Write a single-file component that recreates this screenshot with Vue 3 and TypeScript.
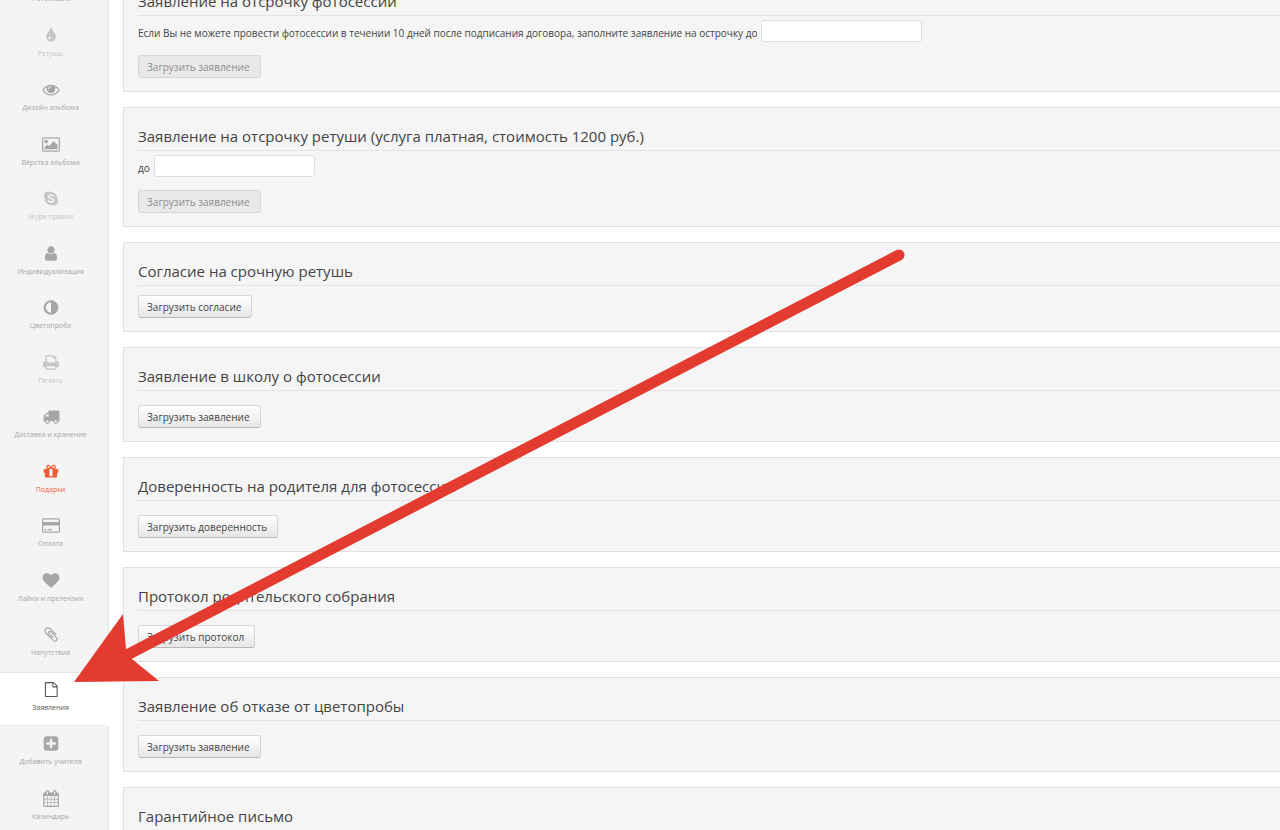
<script setup lang="ts">
type Tone = 'normal' | 'faded' | 'hot' | 'active'

interface NavItem {
  label: string
  tone: Tone
  path: string
  viewBox?: string
}

interface Panel {
  id: string
  title: string
  action: string
  disabled?: boolean
  field?: string
  tight?: boolean
}

const nav: NavItem[] = [
  {
    label: 'Фотосессия',
    tone: 'normal',
    path: 'M192 448h1408v1024h-1408z',
  },
  {
    label: 'Ретушь',
    tone: 'faded',
    path: 'M896 1152q0-36-20-69-1-1-15.5-22.5t-25.5-38-25-44-21-50.5q-4-16-21-16t-21 16q-7 23-21 50.5t-25 44-25.5 38-15.5 22.5q-20 33-20 69 0 53 37.5 90.5t90.5 37.5 90.5-37.5 37.5-90.5zm512-128q0 212-150 362t-362 150-362-150-150-362q0-145 81-275 6-9 62.5-90.5t101-151 99.5-178 83-201.5q9-30 34-47t51-17 51.5 17 33.5 47q28 93 83 201.5t99.5 178 101 151 62.5 90.5q81 127 81 275z',
  },
  {
    label: 'Дизайн альбома',
    tone: 'normal',
    path: 'M1664 960q-152-236-381-353 61 104 61 225 0 185-131.5 316.5t-316.5 131.5-316.5-131.5-131.5-316.5q0-121 61-225-229 117-381 353 133 205 333.5 326.5t434.5 121.5 434.5-121.5 333.5-326.5zm-720-384q0-20-14-34t-34-14q-125 0-214.5 89.5t-89.5 214.5q0 20 14 34t34 14 34-14 14-34q0-86 61-147t147-61q20 0 34-14t14-34zm848 384q0 34-20 69-140 230-376.5 368.5t-499.5 138.5-499.5-139-376.5-368q-20-35-20-69t20-69q140-229 376.5-368t499.5-139 499.5 139 376.5 368q20 35 20 69z',
  },
  {
    label: 'Вёрстка альбома',
    tone: 'normal',
    viewBox: '-64 0 1920 1792',
    path: 'M576 576q0 80-56 136t-136 56-136-56-56-136 56-136 136-56 136 56 56 136zm1024 384v448h-1408v-192l320-320 160 160 512-512zm96-704h-1600q-13 0-22.5 9.5t-9.5 22.5v1216q0 13 9.5 22.5t22.5 9.5h1600q13 0 22.5-9.5t9.5-22.5v-1216q0-13-9.5-22.5t-22.5-9.5zm160 32v1216q0 66-47 113t-113 47h-1600q-66 0-113-47t-47-113v-1216q0-66 47-113t113-47h1600q66 0 113 47t47 113z',
  },
  { label: 'Skype правки', tone: 'faded', path: '' },
  {
    label: 'Индивидуализация',
    tone: 'normal',
    path: 'M1536 1399q0 109-62.5 187t-150.5 78h-854q-88 0-150.5-78t-62.5-187q0-85 8.5-160.5t31.5-152 58.5-131 94-89 134.5-34.5q131 128 313 128t313-128q76 0 134.5 34.5t94 89 58.5 131 31.5 152 8.5 160.5zm-256-887q0 159-112.5 271.5t-271.5 112.5-271.5-112.5-112.5-271.5 112.5-271.5 271.5-112.5 271.5 112.5 112.5 271.5z',
  },
  {
    label: 'Цветопроба',
    tone: 'normal',
    path: 'M896 1440v-1088q-148 0-273 73t-198 198-73 273 73 273 198 198 273 73zm768-544q0 209-103 385.5t-279.5 279.5-385.5 103-385.5-103-279.5-279.5-103-385.5 103-385.5 279.5-279.5 385.5-103 385.5 103 279.5 279.5 103 385.5z',
  },
  {
    label: 'Печать',
    tone: 'faded',
    path: 'M448 1536h896v-256h-896v256zm0-640h896v-384h-160q-40 0-68-28t-28-68v-160h-640v640zm1152 64q0-26-19-45t-45-19-45 19-19 45 19 45 45 19 45-19 19-45zm128 0v416q0 13-9.5 22.5t-22.5 9.5h-224v160q0 40-28 68t-68 28h-960q-40 0-68-28t-28-68v-160h-224q-13 0-22.5-9.5t-9.5-22.5v-416q0-79 56.5-135.5t135.5-56.5h64v-544q0-40 28-68t68-28h672q40 0 88 20t76 48l152 152q28 28 48 76t20 88v256h64q79 0 135.5 56.5t56.5 135.5z',
  },
  {
    label: 'Доставка и хранение',
    tone: 'normal',
    path: 'M640 1408q0-52-38-90t-90-38-90 38-38 90 38 90 90 38 90-38 38-90zm-384-512h384v-256h-158q-13 0-22 9l-195 195q-9 9-9 22v30zm1280 512q0-52-38-90t-90-38-90 38-38 90 38 90 90 38 90-38 38-90zm256-1088v1024q0 15-4 26.5t-13.5 18.5-16.5 11.5-23.5 6-22.5 2-25.5 0-22.5-.5q0 106-75 181t-181 75-181-75-75-181h-384q0 106-75 181t-181 75-181-75-75-181h-64q-3 0-22.5.5t-25.5 0-22.5-2-23.5-6-16.5-11.5-13.5-18.5-4-26.5q0-26 19-45t45-19v-320q0-8-.5-35t0-38 2.5-34.5 6.5-37 14-30.5 22.5-30l198-198q19-19 50.5-32t58.5-13h160v-192q0-26 19-45t45-19h1024q26 0 45 19t19 45z',
  },
  {
    label: 'Подарки',
    tone: 'hot',
    path: 'M1056 1356v-716h-320v716q0 25 18 38.5t46 13.5h192q28 0 46-13.5t18-38.5zm-456-844h195l-126-161q-26-31-69-31-40 0-68 28t-28 68 28 68 68 28zm688-96q0-40-28-68t-68-28q-43 0-69 31l-125 161h194q40 0 68-28t28-68zm376 256v320q0 14-9 23t-23 9h-96v416q0 40-28 68t-68 28h-1088q-40 0-68-28t-28-68v-416h-96q-14 0-23-9t-9-23v-320q0-14 9-23t23-9h440q-93 0-158.5-65.5t-65.5-158.5 65.5-158.5 158.5-65.5q107 0 168 77l128 165 128-165q61-77 168-77 93 0 158.5 65.5t65.5 158.5-65.5 158.5-158.5 65.5h440q14 0 23 9t9 23z',
  },
  {
    label: 'Оплата',
    tone: 'normal',
    viewBox: '0 0 1920 1792',
    path: 'M1760 128q66 0 113 47t47 113v1216q0 66-47 113t-113 47h-1600q-66 0-113-47t-47-113v-1216q0-66 47-113t113-47h1600zm-1600 128q-13 0-22.5 9.5t-9.5 22.5v224h1664v-224q0-13-9.5-22.5t-22.5-9.5h-1600zm1600 1280q13 0 22.5-9.5t9.5-22.5v-608h-1664v608q0 13 9.5 22.5t22.5 9.5h1600zm-1504-128v-128h256v128h-256zm384 0v-128h384v128h-384z',
  },
  {
    label: 'Лайки и претензии',
    tone: 'normal',
    path: 'M896 1664q-26 0-44-18l-624-602q-10-8-27.5-26t-55.5-65.5-68-97.5-53.5-121-23.5-138q0-220 127-344t351-124q62 0 126.5 21.5t120 58 95.5 68.5 76 68q36-36 76-68t95.5-68.5 120-58 126.5-21.5q224 0 351 124t127 344q0 221-229 450l-623 600q-18 18-44 18z',
  },
  {
    label: 'Напутствия',
    tone: 'normal',
    path: 'M1596 1385q0 117-79 196t-196 79q-135 0-235-100l-777-776q-113-115-113-271 0-159 110-270t269-111q158 0 273 113l605 606q10 10 10 22 0 16-30.5 46.5t-46.5 30.5q-13 0-23-10l-606-607q-79-77-181-77-106 0-179 75t-73 181q0 105 76 181l776 777q63 63 145 63 64 0 106-42t42-106q0-82-63-145l-581-581q-26-24-60-24-29 0-48 19t-19 48q0 32 25 59l410 410q10 10 10 22 0 16-31 47t-47 31q-12 0-22-10l-410-410q-63-61-63-149 0-82 57-139t139-57q88 0 149 63l581 581q100 98 100 235z',
  },
  {
    label: 'Заявления',
    tone: 'active',
    viewBox: '-224 -128 1920 2048',
    path: 'M1468 380q28 28 48 76t20 88v1152q0 40-28 68t-68 28h-1344q-40 0-68-28t-28-68v-1600q0-40 28-68t68-28h896q40 0 88 20t76 48zm-444-244v376h376q-10-29-22-41l-313-313q-12-12-41-22zm384 1528v-1024h-416q-40 0-68-28t-28-68v-416h-768v1536h1280z',
  },
  {
    label: 'Добавить учителя',
    tone: 'normal',
    path: 'M1408 960v-128q0-26-19-45t-45-19h-320v-320q0-26-19-45t-45-19h-128q-26 0-45 19t-19 45v320h-320q-26 0-45 19t-19 45v128q0 26 19 45t45 19h320v320q0 26 19 45t45 19h128q26 0 45-19t19-45v-320h320q26 0 45-19t19-45zm256-544v960q0 119-84.5 203.5t-203.5 84.5h-960q-119 0-203.5-84.5t-84.5-203.5v-960q0-119 84.5-203.5t203.5-84.5h960q119 0 203.5 84.5t84.5 203.5z',
  },
  {
    label: 'Календарь',
    tone: 'normal',
    path: 'M192 1664h288v-288h-288v288zm352 0h320v-288h-320v288zm-352-352h288v-320h-288v320zm352 0h320v-320h-320v320zm-352-384h288v-288h-288v288zm736 736h320v-288h-320v288zm-384-736h320v-288h-320v288zm768 736h288v-288h-288v288zm-384-352h320v-320h-320v320zm-352-864v-288q0-13-9.5-22.5t-22.5-9.5h-64q-13 0-22.5 9.5t-9.5 22.5v288q0 13 9.5 22.5t22.5 9.5h64q13 0 22.5-9.5t9.5-22.5zm736 864h288v-320h-288v320zm-384-384h320v-288h-320v288zm384 0h288v-288h-288v288zm32-480v-288q0-13-9.5-22.5t-22.5-9.5h-64q-13 0-22.5 9.5t-9.5 22.5v288q0 13 9.5 22.5t22.5 9.5h64q13 0 22.5-9.5t9.5-22.5zm384-64v1280q0 52-38 90t-90 38h-1408q-52 0-90-38t-38-90v-1280q0-52 38-90t90-38h128v-96q0-66 47-113t113-47h64q66 0 113 47t47 113v96h384v-96q0-66 47-113t113-47h64q66 0 113 47t47 113v96h128q52 0 90 38t38 90z',
  },
]

const panels: Panel[] = [
  {
    id: 'delay-shoot',
    title: 'Заявление на отсрочку фотосессии',
    field: 'Если Вы не можете провести фотосессии в течении 10 дней после подписания договора, заполните заявление на острочку до',
    action: 'Загрузить заявление',
    disabled: true,
  },
  {
    id: 'delay-retouch',
    title: 'Заявление на отсрочку ретуши (услуга платная, стоимость 1200 руб.)',
    field: 'до',
    action: 'Загрузить заявление',
    disabled: true,
  },
  { id: 'urgent', title: 'Согласие на срочную ретушь', action: 'Загрузить согласие', tight: true },
  { id: 'school', title: 'Заявление в школу о фотосессии', action: 'Загрузить заявление' },
  { id: 'proxy', title: 'Доверенность на родителя для фотосессии', action: 'Загрузить доверенность' },
  { id: 'protocol', title: 'Протокол родительского собрания', action: 'Загрузить протокол' },
  { id: 'refusal', title: 'Заявление об отказе от цветопробы', action: 'Загрузить заявление' },
  { id: 'guarantee', title: 'Гарантийное письмо', action: 'Загрузить письмо' },
]
</script>

<template>
  <div class="page">
    <nav class="sidebar">
      <ul class="nav-list">
        <li v-for="item in nav" :key="item.label" class="nav-item" :class="item.tone">
          <a href="#" class="nav-link">
            <svg v-if="item.path" class="nav-icon" :viewBox="item.viewBox ?? '0 0 1792 1792'" aria-hidden="true">
              <path :d="item.path" fill="currentColor" />
            </svg>
            <svg v-else class="nav-icon" viewBox="0 0 18 18" aria-hidden="true">
              <circle cx="6" cy="6" r="4.5" fill="currentColor" />
              <circle cx="12" cy="12" r="4.5" fill="currentColor" />
              <circle cx="9" cy="9" r="6.8" fill="currentColor" />
              <path
                class="skype-mark"
                d="M11.8 6.8C11.3 5.7 10.3 5.4 9 5.4C7.4 5.4 6.4 6.1 6.4 7.2C6.4 9.6 11.8 8.3 11.8 10.8C11.8 12 10.6 12.6 9 12.6C7.5 12.6 6.5 12.1 6.1 11"
              />
            </svg>
            <span class="nav-label">{{ item.label }}</span>
          </a>
        </li>
      </ul>
    </nav>

    <main class="content">
      <section v-for="panel in panels" :key="panel.id" class="panel">
        <h2 class="panel-title">{{ panel.title }}</h2>
        <div v-if="panel.field" class="field">
          <label :for="panel.id">{{ panel.field }}</label>
          <input :id="panel.id" class="field-input" type="text" />
        </div>
        <button
          type="button"
          class="button"
          :class="{ tight: panel.tight, 'after-field': panel.field }"
          :disabled="panel.disabled"
        >
          {{ panel.action }}
        </button>
      </section>
    </main>

    <svg class="arrow" width="1280" height="830" viewBox="0 0 1280 830" aria-hidden="true">
      <path class="arrow-shaft" d="M899 255L125 656" />
      <path class="arrow-head" d="M74 682L123 614L126 649L132 659L159 681Z" />
    </svg>
  </div>
</template>

<style>
body {
  margin: 0;
  background: #fff;
}
</style>

<style scoped>
.page {
  position: relative;
  display: flex;
  align-items: flex-start;
  gap: 14px;
  height: 100vh;
  overflow: hidden;
  font-family: "Open Sans", "Noto Sans", sans-serif;
  color: #444;
}

.sidebar {
  flex: none;
  width: 109px;
  margin-top: -37px;
}

.nav-list {
  margin: 0;
  padding: 0;
  list-style: none;
}

.nav-item {
  box-sizing: border-box;
  height: 55px;
  background: #f4f4f4;
  border-right: 2px solid #ebebeb;
  color: #a6a6a6;
}

.nav-item:nth-child(even) {
  height: 54px;
}

.nav-item.faded {
  color: #c6c6c6;
}

.nav-item.hot {
  color: #f05a35;
}

.nav-item.active {
  background: #fff;
  border-right-color: #fff;
  box-shadow: inset 0 1px #e8e8e8, inset 0 -1px #e8e8e8;
  color: #555;
}

.nav-link {
  display: flex;
  flex-direction: column;
  align-items: center;
  gap: 5px;
  padding: 9px 6px 0 0;
  color: inherit;
  text-decoration: none;
}

.nav-icon {
  width: 18px;
  height: 17px;
}

.skype-mark {
  fill: none;
  stroke: #f4f4f4;
  stroke-width: 1.6;
  stroke-linecap: round;
}

.nav-label {
  font-size: 7px;
  line-height: 10px;
  white-space: nowrap;
}

.content {
  flex: 1;
  min-width: 0;
  display: flex;
  flex-direction: column;
  gap: 15px;
  margin-top: -28px;
}

.panel {
  display: flex;
  flex-direction: column;
  align-items: flex-start;
  padding: 0 0 13px 14px;
  background: #f5f5f5;
  border: 1px solid #e0e0e0;
  border-right: 0;
}

.panel-title {
  align-self: stretch;
  margin: 0;
  padding: 16px 0 2px;
  border-bottom: 1px solid #e4e4e4;
  font-size: 15px;
  line-height: 24px;
  font-weight: 400;
}

.field {
  display: flex;
  align-items: center;
  gap: 4px;
  margin-top: 4px;
  font-size: 10px;
  line-height: 22px;
}

.field label {
  padding-top: 4px;
  line-height: 18px;
}

.field-input {
  box-sizing: border-box;
  width: 161px;
  height: 22px;
  padding: 2px 6px;
  border: 1px solid #ddd;
  border-radius: 3px;
  background: #fff;
  font: inherit;
}

.button {
  box-sizing: border-box;
  height: 23px;
  margin-top: 14px;
  padding: 0 10px 0 8px;
  border: 1px solid #d6d6d6;
  border-bottom-color: #b8b8b8;
  border-radius: 3px;
  background: linear-gradient(#fff, #e6e6e6);
  color: #444;
  font-family: inherit;
  font-size: 10px;
  line-height: 20px;
}

.button.after-field {
  margin-top: 13px;
}

.button.tight {
  margin-top: 9px;
}

.button:disabled {
  background: #e9e9e9;
  border-color: #d6d6d6;
  color: #8e8e8e;
}

.arrow {
  position: absolute;
  top: 0;
  left: 0;
  pointer-events: none;
}

.arrow-shaft {
  fill: none;
  stroke: #e33b30;
  stroke-width: 11;
  stroke-linecap: round;
}

.arrow-head {
  fill: #e33b30;
}
</style>
